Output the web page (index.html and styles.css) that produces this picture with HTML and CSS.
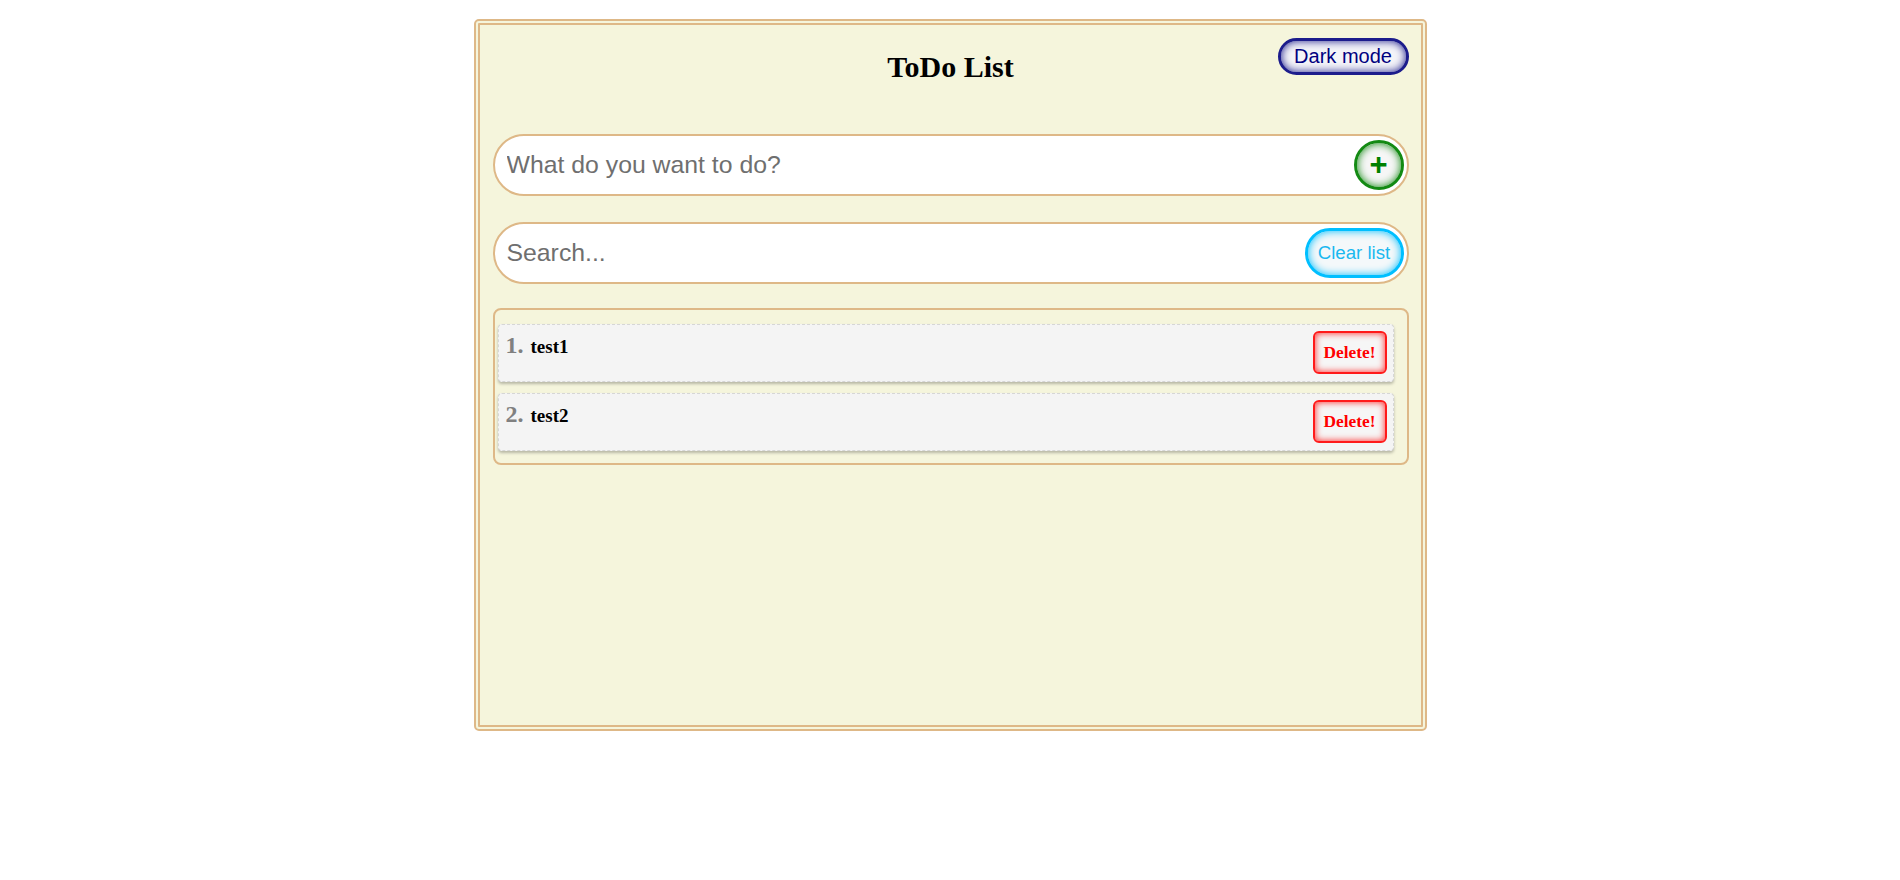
FILE: index.html
```html
<!DOCTYPE html>
<html lang="en">
<head>
<meta charset="utf-8">
<title>ToDo List</title>
<link rel="stylesheet" href="styles.css">
</head>
<body>
<main class="app">
  <header class="app-header">
    <h1 class="title">ToDo List</h1>
    <button class="btn-dark" type="button">Dark mode</button>
  </header>
  <div class="field field-add">
    <input class="field-input" type="text" placeholder="What do you want to do?">
    <button class="btn-add" type="button">+</button>
  </div>
  <div class="field field-search">
    <input class="field-input" type="text" placeholder="Search...">
    <button class="btn-clear" type="button">Clear list</button>
  </div>
  <ol class="todo-list">
    <li class="todo-item">
      <div class="todo-label"><span class="todo-num">1.</span><span class="todo-text">test1</span></div>
      <button class="btn-delete" type="button">Delete!</button>
    </li>
    <li class="todo-item">
      <div class="todo-label"><span class="todo-num">2.</span><span class="todo-text">test2</span></div>
      <button class="btn-delete" type="button">Delete!</button>
    </li>
  </ol>
</main>
</body>
</html>
```

FILE: styles.css
```css
html, body {
  margin: 0;
  padding: 0;
  background: #ffffff;
}

body {
  font-family: "Liberation Serif", "Times New Roman", serif;
}

.app {
  box-sizing: border-box;
  width: 953px;
  height: 712px;
  margin: 19px auto 0;
  padding: 13px 12px 0 13px;
  background: #f5f5dc;
  border: 6px double #deb887;
  border-radius: 5px;
}

.app-header {
  display: grid;
  grid-template-columns: 1fr auto 1fr;
  align-items: start;
  height: 46px;
}

.title {
  grid-column: 2;
  margin: 10px 0 0;
  font-family: "Liberation Serif", "Times New Roman", serif;
  font-size: 30px;
  font-weight: bold;
  line-height: 37px;
  color: #000;
}

.btn-dark {
  grid-column: 3;
  justify-self: end;
  box-sizing: border-box;
  height: 37px;
  width: 131px;
  padding: 0;
  font-family: "Liberation Sans", Arial, sans-serif;
  font-size: 20px;
  color: #000080;
  background: #f4f4f8;
  border: 3px solid #1c1c8c;
  border-radius: 19px;
  box-shadow: inset 0 0 8px #1c1c8c;
}

.field {
  box-sizing: border-box;
  display: flex;
  align-items: center;
  height: 62px;
  padding: 0 3px 0 0;
  background: #ffffff;
  border: 2px solid #deb887;
  border-radius: 31px;
}

.field-add {
  margin-top: 50px;
}

.field-search {
  margin-top: 26px;
}

.field-input {
  flex: 1;
  min-width: 0;
  height: 100%;
  padding: 0 0 0 12px;
  border: none;
  outline: none;
  background: transparent;
  font-family: "Liberation Sans", Arial, sans-serif;
  font-size: 24.8px;
  color: #000;
}

.field-input::placeholder {
  color: #6f6f6f;
}

.btn-add {
  box-sizing: border-box;
  width: 50px;
  height: 50px;
  padding: 0 0 2px;
  font-family: "Liberation Sans", Arial, sans-serif;
  font-size: 31px;
  font-weight: bold;
  line-height: 1;
  color: #008000;
  background: #f6f6f6;
  border: 3px solid #138a13;
  border-radius: 50%;
  box-shadow: inset 0 0 9px #138a13;
}

.btn-clear {
  box-sizing: border-box;
  width: 99px;
  height: 50px;
  padding: 0;
  font-family: "Liberation Sans", Arial, sans-serif;
  font-size: 18.67px;
  color: #1ab8f0;
  background: #f4f8fa;
  border: 3px solid #00bfff;
  border-radius: 25px;
  box-shadow: inset 0 0 9px #00bfff;
}

.todo-list {
  list-style: none;
  margin: 24px 0 0;
  padding: 14px 13px 12px 3px;
  border: 2px solid #deb887;
  border-radius: 8px;
  display: flex;
  flex-direction: column;
  gap: 11px;
}

.todo-item {
  box-sizing: border-box;
  display: flex;
  justify-content: space-between;
  align-items: flex-start;
  height: 58px;
  padding: 6px 6px 7px 7px;
  background: #f4f4f4;
  border: 1px dashed #d6d6d6;
  border-radius: 4px;
  box-shadow: 0 2px 3px rgba(0, 0, 0, 0.25);
}

.todo-label {
  font-family: "Liberation Serif", "Times New Roman", serif;
  font-weight: bold;
  font-size: 24px;
  line-height: 28px;
}

.todo-num {
  color: #808080;
}

.todo-text {
  margin-left: 7px;
  font-size: 19px;
  color: #000;
}

.btn-delete {
  box-sizing: border-box;
  width: 74px;
  height: 43px;
  padding: 0;
  font-family: "Liberation Serif", "Times New Roman", serif;
  font-size: 17.33px;
  font-weight: bold;
  color: #ff0000;
  background: #f6f6f6;
  border: 2px solid #ff1a1a;
  border-radius: 6px;
  box-shadow: inset 0 0 7px #ff2020;
}
```
